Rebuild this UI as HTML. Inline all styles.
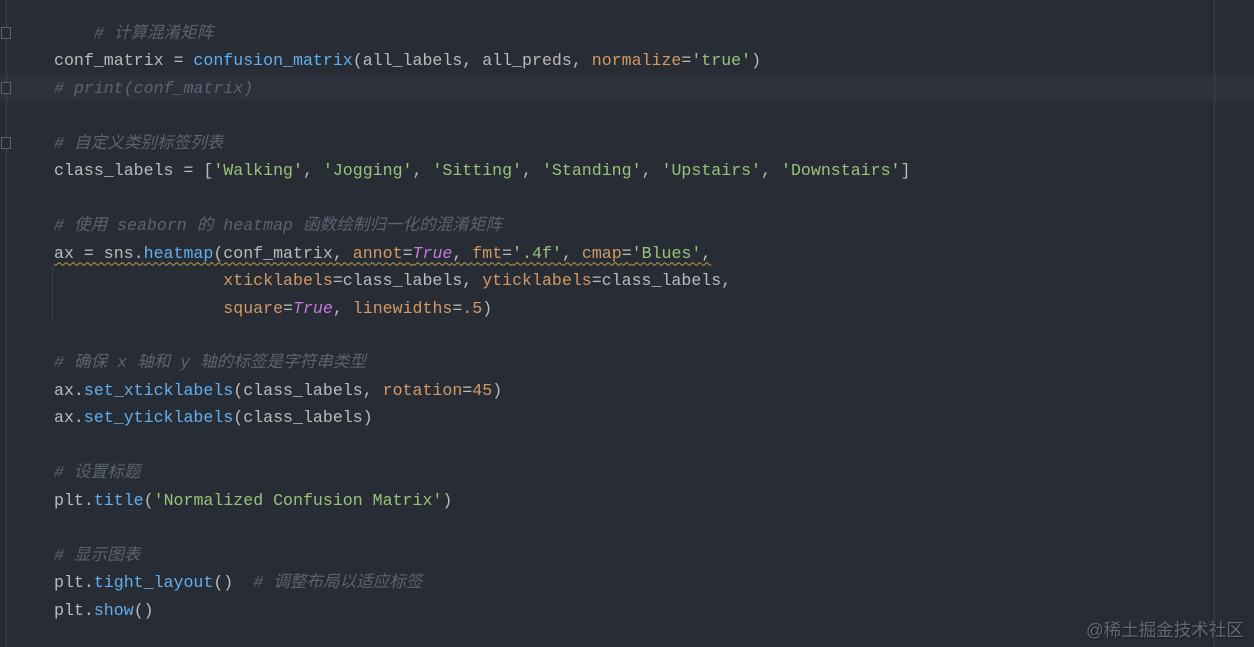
<!DOCTYPE html><html><head><meta charset="utf-8"><style>
html,body{margin:0;width:1254px;height:647px;overflow:hidden}
body{background:#282c34;position:relative;font-family:"Liberation Mono","Noto Sans CJK SC",monospace;font-size:16.6px;color:#bbbbbb}
.cur{position:absolute;left:0;top:74px;width:1254px;height:27px;background:#2c313c}
.vl{position:absolute;left:1214px;top:0;width:1px;height:647px;background:#3b4048}
.gl{position:absolute;left:6px;top:0;width:1px;height:647px;background:#3b4048}
.ig{position:absolute;left:52px;top:266px;width:1px;height:55px;background:#3b4048}
.code{position:absolute;left:54px;top:20px;line-height:27.45px;white-space:pre}
.c{color:#5c6370;font-style:italic}.f{color:#61afef}.o{color:#d19a66}.s{color:#98c379}.k{color:#c678dd;font-style:italic}
.w{text-decoration:underline wavy #b8a04a;text-underline-offset:4px;text-decoration-thickness:1px}
.wm{position:absolute;left:1086px;top:617px;white-space:nowrap;font-family:"Liberation Sans","Noto Sans CJK SC",sans-serif;font-size:17.5px;color:#646973;text-shadow:1px 1px 1px #1a1d22}
.fold{position:absolute;left:1px;width:10px;height:12px;border:1px solid #5c6370;box-sizing:border-box;background:#282c34}
</style></head><body>
<div class="cur"></div><div class="gl"></div><div class="vl"></div><div class="ig"></div>
<div class="fold" style="top:27px"></div><div class="fold" style="top:82px"></div><div class="fold" style="top:137px"></div>
<div class="code"><span class="c">    # 计算混淆矩阵</span>
conf_matrix = <span class="f">confusion_matrix</span>(all_labels, all_preds, <span class="o">normalize</span>=<span class="s">'true'</span>)
<span class="c"># print(conf_matrix)</span>

<span class="c"># 自定义类别标签列表</span>
class_labels = [<span class="s">'Walking'</span>, <span class="s">'Jogging'</span>, <span class="s">'Sitting'</span>, <span class="s">'Standing'</span>, <span class="s">'Upstairs'</span>, <span class="s">'Downstairs'</span>]

<span class="c"># 使用 seaborn 的 heatmap 函数绘制归一化的混淆矩阵</span>
<span class="w">ax = sns.<span class="f">heatmap</span>(conf_matrix, <span class="o">annot</span>=<span class="k">True</span>, <span class="o">fmt</span>=<span class="s">'.4f'</span>, <span class="o">cmap</span>=<span class="s">'Blues'</span>,</span>
                 <span class="o">xticklabels</span>=class_labels, <span class="o">yticklabels</span>=class_labels,
                 <span class="o">square</span>=<span class="k">True</span>, <span class="o">linewidths</span>=<span class="o">.5</span>)

<span class="c"># 确保 x 轴和 y 轴的标签是字符串类型</span>
ax.<span class="f">set_xticklabels</span>(class_labels, <span class="o">rotation</span>=<span class="o">45</span>)
ax.<span class="f">set_yticklabels</span>(class_labels)

<span class="c"># 设置标题</span>
plt.<span class="f">title</span>(<span class="s">'Normalized Confusion Matrix'</span>)

<span class="c"># 显示图表</span>
plt.<span class="f">tight_layout</span>()  <span class="c"># 调整布局以适应标签</span>
plt.<span class="f">show</span>()</div>
<div class="wm">@稀土掘金技术社区</div>
</body></html>
